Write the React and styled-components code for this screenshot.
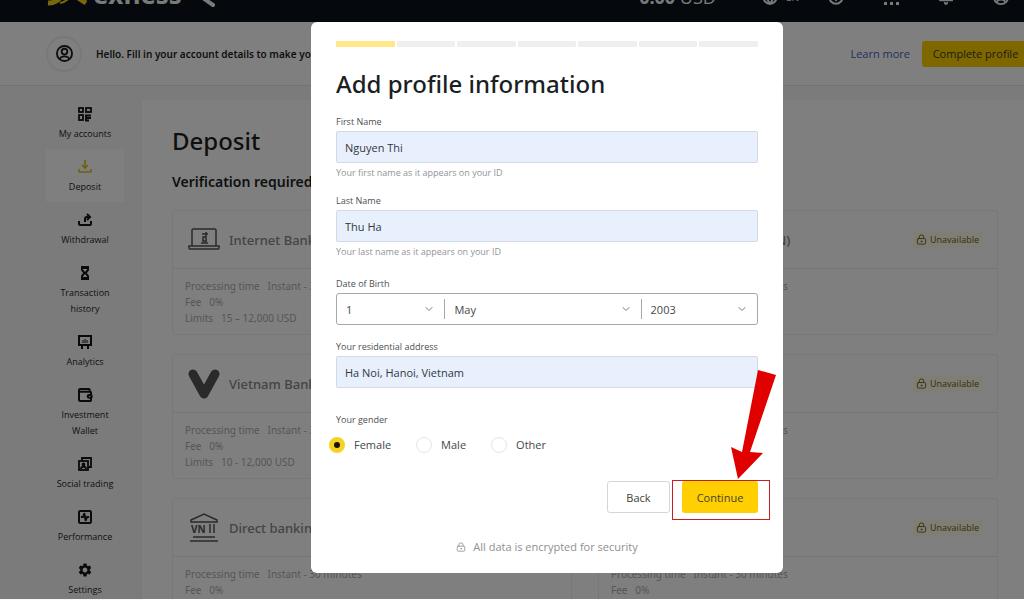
import React, { useState } from "react";
import styled, { createGlobalStyle } from "styled-components";
import {
  LuBell,
  LuChevronDown,
  LuCircleHelp,
  LuGlobe,
  LuLockKeyhole,
  LuSquareActivity,
  LuWallet,
} from "react-icons/lu";
import { MdSettings } from "react-icons/md";

const GlobalStyle = createGlobalStyle`
  * {
    box-sizing: border-box;
  }
  body {
    margin: 0;
    overflow: hidden;
    background-color: #f7f7f7;
    color: #1b1f23;
  }
  body, button, input, select {
    font-family: "Open Sans", "Noto Sans", sans-serif;
  }
`;

/* the page is a little wider than the window and is clipped on the right */
const Page = styled.div`
  width: calc(100% + 70px);
  height: 100vh;
  overflow: hidden;
`;

const TopBar = styled.header`
  display: flex;
  align-items: center;
  gap: 16px;
  height: 50px;
  margin-top: -28px;
  padding: 0 85px 0 47px;
  background-color: #0a121c;
  color: #f4f4f4;
`;

const Brand = styled.a`
  display: flex;
  align-items: center;
  gap: 5px;
  margin-bottom: 6px;
  color: inherit;
  font-size: 26px;
  font-weight: 700;
  line-height: 26px;
  text-decoration: none;
`;

const Balance = styled.div`
  margin-left: auto;
  margin-right: 30px;
  font-size: 18px;
  line-height: 24px;
`;

const TopIcons = styled.nav`
  display: flex;
  align-items: center;
  gap: 39px;
`;

const Language = styled.span`
  display: flex;
  align-items: center;
  gap: 8px;
  margin-right: -10px;
  font-size: 10px;
`;

const Banner = styled.section`
  display: flex;
  align-items: center;
  height: 64px;
  padding: 0 65px 0 46px;
  background-color: #fff;
  border-bottom: 1px solid #e4e4e4;
  font-size: 11px;
`;

const Avatar = styled.span`
  display: flex;
  align-items: center;
  justify-content: center;
  width: 36px;
  height: 36px;
  margin-right: 14px;
  border: 2px solid #f0f0f0;
  border-radius: 50%;
`;

const Hello = styled.p`
  margin: 0;
  font-family: "Noto Sans", sans-serif;
  font-size: 10px;
  font-weight: 600;
`;

const LearnMore = styled.a`
  margin-left: auto;
  margin-right: 12px;
  color: #3f62b5;
  text-decoration: none;
`;

const CompleteButton = styled.button`
  width: 107px;
  height: 26px;
  padding: 0;
  border: 0;
  border-radius: 3px;
  background-color: #ffcf01;
  color: #3d3a2a;
  font-size: 11px;
`;

const Main = styled.div`
  display: flex;
  align-items: flex-start;
`;

const SideBar = styled.nav`
  display: flex;
  flex-direction: column;
  width: 141px;
  padding: 10px 17px 0 46px;
`;

const SideItem = styled.a`
  display: flex;
  flex-direction: column;
  align-items: center;
  gap: 4px;
  padding: 10px 8px 7px;
  background-color: ${(props) => (props.$active ? "#fff" : "transparent")};
  color: #1b1f23;
  font-size: 9px;
  line-height: 16px;
  text-align: center;
  text-decoration: none;

  svg {
    flex-shrink: 0;
    color: ${(props) => (props.$active ? "#e0be20" : "#101418")};
  }
`;

const Panel = styled.main`
  flex: 1;
  margin: 13px 65px 0 0;
  padding: 25px 30px;
  background-color: #fff;
  border: 1px solid #f4f4f4;
`;

const PageTitle = styled.h1`
  margin: 0 0 16px;
  font-family: "Noto Sans", sans-serif;
  font-size: 24px;
  font-weight: 500;
  line-height: 32px;
`;

const SubTitle = styled.h2`
  margin: 0 0 19px;
  font-family: "Noto Sans", sans-serif;
  font-size: 14px;
  font-weight: 600;
  line-height: 18px;
`;

const CardGrid = styled.div`
  display: grid;
  grid-template-columns: 1fr 1fr;
  gap: 19px 26px;
`;

const Card = styled.article`
  height: 125px;
  border: 1px solid #f0f0f0;
  border-radius: 3px;
`;

const CardHead = styled.header`
  display: flex;
  align-items: center;
  gap: 9px;
  height: 58px;
  padding: 0 15px;
  border-bottom: 1px solid #e8e8e8;
  color: #888;
  font-family: "Noto Sans", sans-serif;
  font-size: 13px;
  font-weight: 500;
`;

const CardName = styled.span`
  flex: 1;
  white-space: nowrap;
`;

const Unavailable = styled.span`
  display: flex;
  align-items: center;
  gap: 3px;
  padding: 2px 3px;
  background-color: #fffbe8;
  color: #6b5c12;
  font-family: "Open Sans", sans-serif;
  font-size: 9px;
`;

const CardBody = styled.div`
  padding: 9px 12px;
  color: #acacac;
  font-family: "Noto Sans", sans-serif;
  font-size: 10px;
  line-height: 16px;
`;

const Overlay = styled.div`
  position: absolute;
  inset: 0 -70px 1px 0;
  display: flex;
  align-items: flex-start;
  justify-content: center;
  padding-top: 22px;
  background-color: rgba(0, 0, 0, 0.5);
`;

const Dialog = styled.form`
  width: 472px;
  padding: 19px 25px;
  border-radius: 6px;
  background-color: #fff;
`;

const Steps = styled.div`
  display: grid;
  grid-template-columns: repeat(7, 1fr);
  gap: 2px;
  margin-bottom: 21px;
`;

const Step = styled.span`
  height: 6px;
  border-radius: 1px;
  background-color: ${(props) => (props.$done ? "#ffe78a" : "#efefef")};
`;

const DialogTitle = styled.h2`
  margin: 0 0 15px;
  font-family: "Noto Sans", sans-serif;
  font-size: 24px;
  font-weight: 500;
  line-height: 32px;
`;

const Field = styled.div`
  display: flex;
  flex-direction: column;
  margin-bottom: ${(props) => props.$space}px;
`;

const Label = styled.label`
  margin-bottom: 2px;
  color: #4c4f52;
  font-size: 9px;
  line-height: 14px;
`;

const TextInput = styled.input`
  height: 32px;
  padding: 0 8px;
  border: 1px solid #d3dae6;
  border-radius: 2px;
  background-color: #e8f0fe;
  color: #34383d;
  font-size: 11px;
`;

const Hint = styled.small`
  margin-top: 3px;
  color: #929496;
  font-size: 9px;
  line-height: 14px;
`;

const DateBox = styled.div`
  display: grid;
  grid-template-columns: 109fr 197fr 116fr;
  align-items: center;
  height: 32px;
  border: 1px solid #a5a7a9;
  border-radius: 3px;
`;

const SelectWrap = styled.div`
  display: grid;
  align-items: center;
  height: 20px;
  border-right: 1px solid #a5a7a9;

  &:last-child {
    border-right: 0;
  }
  > * {
    grid-area: 1 / 1;
  }
  svg {
    justify-self: end;
    margin-right: 9px;
    color: #77797c;
    pointer-events: none;
  }
`;

const Select = styled.select`
  height: 20px;
  padding: 0 9px;
  border: 0;
  appearance: none;
  background-color: transparent;
  color: #44474a;
  font-size: 11px;
`;

const GenderRow = styled.div`
  display: flex;
  gap: 25px;
  height: 16px;
  margin: 8px 0 28px -7px;
`;

const RadioLabel = styled.label`
  display: flex;
  align-items: center;
  gap: 9px;
  color: #44474a;
  font-size: 11px;
  line-height: 16px;
`;

const Radio = styled.input`
  width: 16px;
  height: 16px;
  margin: 0;
  border: 1px solid #e4e4e4;
  border-radius: 50%;
  appearance: none;
  background-color: #fff;

  &:checked {
    border: 5px solid #f6d321;
    background-color: #17140a;
  }
`;

const Actions = styled.div`
  display: flex;
  justify-content: flex-end;
  gap: 12px;
`;

const Button = styled.button`
  width: ${(props) => (props.$primary ? 76 : 63)}px;
  height: 32px;
  padding: 0;
  border: ${(props) => (props.$primary ? "0" : "1px solid #d6d6d6")};
  border-radius: 3px;
  background-color: ${(props) => (props.$primary ? "#ffcf01" : "#fff")};
  color: #44412f;
  font-size: 11px;
`;

const Marked = styled.div`
  position: relative;
`;

const MarkFrame = styled.span`
  position: absolute;
  inset: -1px -12px -7px -10px;
  border: 1px solid #c81c28;
  pointer-events: none;
`;

const MarkArrow = styled.svg`
  position: absolute;
  bottom: calc(100% + 2px);
  left: 48px;
`;

const Secure = styled.p`
  display: flex;
  align-items: center;
  justify-content: center;
  gap: 7px;
  margin: 26px 0 0;
  color: #8e9092;
  font-size: 11px;
  line-height: 15px;
`;

const LogoIcon = () => (
  <svg width="41" height="24" viewBox="0 0 41 24" fill="none" stroke="#f2cf1d" strokeWidth="5">
    <path d="M1 21c14 1 16-18 38-18" />
    <path d="M1 3c16 0 22 8 38 18" />
    <path d="M13 21c6-1 9-4 12-8" strokeWidth="2" />
  </svg>
);

const KeyIcon = () => (
  <svg width="20" height="24" viewBox="0 0 20 24" fill="none" stroke="currentColor" strokeWidth="4">
    <circle cx="5" cy="8" r="4" />
    <path d="M5 13l10 7" strokeLinecap="round" />
  </svg>
);

const DotsIcon = () => (
  <svg width="16" height="16" viewBox="0 0 16 16" fill="currentColor">
    {[1, 7, 13].map((y) => [1, 7, 13].map((x) => <rect key={x + "-" + y} x={x} y={y} width="3" height="3" />))}
  </svg>
);

const UserIcon = ({ size = 17 }) => (
  <svg width={size} height={size} viewBox="0 0 18 18" fill="none" stroke="currentColor" strokeWidth="2">
    <circle cx="9" cy="9" r="8" />
    <circle cx="9" cy="7" r="3" />
    <path d="M4 15c1-4 9-4 10 0" />
  </svg>
);

const AccountsIcon = () => (
  <svg width="16" height="16" viewBox="0 0 16 16" fill="none" stroke="currentColor" strokeWidth="1.800">
    <rect x="2" y="2" width="4" height="4" />
    <rect x="9" y="2" width="5" height="4" />
    <rect x="2" y="9" width="4" height="5" />
    <path d="M8 9.500h6M9 12h5M9 9v6M8 14.500h4" />
  </svg>
);

const DepositIcon = () => (
  <svg width="16" height="16" viewBox="0 0 16 16" fill="none" stroke="currentColor" strokeWidth="1.700">
    <path d="M8 1v8M5 6l3 3 3-3M2 10v2q0 1 1 1h10q1 0 1-1v-2" />
  </svg>
);

const WithdrawalIcon = () => (
  <svg width="16" height="16" viewBox="0 0 16 16" fill="none" stroke="currentColor" strokeWidth="2">
    <path d="M2 9v3q0 1 1 1h10q1 0 1-1V9M8 10V7q0-2 2-2h3M10 2l3 3-3 3" />
  </svg>
);

const HourglassIcon = () => (
  <svg width="16" height="16" viewBox="0 0 16 16" fill="none" stroke="currentColor" strokeWidth="2">
    <path d="M5 3h6v2L8.500 8 11 11v2H5v-2l2.500-3L5 5z" />
    <path d="M4 2h8M4 14h8" />
  </svg>
);

const AnalyticsIcon = () => (
  <svg width="16" height="16" viewBox="0 0 16 16" fill="none" stroke="currentColor" strokeWidth="2">
    <rect x="2" y="2" width="12" height="9" />
    <path d="M5 12v3M11 12v3" />
    <path d="M6 6v3M8 5v4M10 6v3" strokeWidth="1" />
  </svg>
);

const SocialIcon = () => (
  <svg width="16" height="16" viewBox="0 0 16 16" fill="none" stroke="currentColor" strokeWidth="1.800">
    <path d="M5 5V2h9v9h-3" />
    <rect x="2" y="5" width="9" height="9" />
    <circle cx="6.500" cy="8.500" r="1" />
    <path d="M4 13c0-3 5-3 5 0" />
  </svg>
);

const LaptopIcon = () => (
  <svg width="32" height="32" viewBox="0 0 32 32" fill="none" stroke="#555" strokeWidth="1.500">
    <path d="M4 22V6q0-1 1-1h22q1 0 1 1v16M1 22h30v2q0 1-1 1H2q-1 0-1-1z" />
    <path d="M18 8v10M14 10h6M18 13h-3v4h3M13 19h7" />
  </svg>
);

const VIcon = () => (
  <svg width="32" height="32" viewBox="0 0 32 32" fill="none" stroke="#555" strokeWidth="9">
    <path d="M5 6l11 20L27 6" strokeLinecap="round" strokeLinejoin="round" />
  </svg>
);

const BankIcon = () => (
  <svg width="32" height="32" viewBox="0 0 32 32" fill="none" stroke="#555" strokeWidth="1.500">
    <path d="M3 8l13-6 13 6v2H3zM5 25h22M2 29h28M22 12v9M26 12v9" />
    <text x="3" y="21" fill="#555" stroke="none" fontSize="10" fontWeight="700">
      VN
    </text>
  </svg>
);

const menu = [
  { name: "My accounts", icon: <AccountsIcon /> },
  { name: "Deposit", icon: <DepositIcon />, active: true },
  { name: "Withdrawal", icon: <WithdrawalIcon /> },
  { name: "Transaction history", icon: <HourglassIcon /> },
  { name: "Analytics", icon: <AnalyticsIcon /> },
  { name: "Investment Wallet", icon: <LuWallet size={16} strokeWidth={3} /> },
  { name: "Social trading", icon: <SocialIcon /> },
  { name: "Performance", icon: <LuSquareActivity size={16} strokeWidth={3} /> },
  { name: "Settings", icon: <MdSettings size={16} /> },
];

const methods = [
  { name: "Internet Banking", icon: <LaptopIcon />, limits: "15 – 12,000 USD" },
  { name: "Internet Banking (VN)", icon: <LaptopIcon />, limits: "15 – 12,000 USD", locked: true },
  { name: "Vietnam Bank Transfer", icon: <VIcon />, limits: "10 - 12,000 USD" },
  { name: "Bank Transfer", icon: <BankIcon />, limits: "10 - 12,000 USD", locked: true },
  { name: "Direct banking", icon: <BankIcon />, limits: "15 - 12,000 USD" },
  { name: "Bank Card", icon: <BankIcon />, limits: "15 - 12,000 USD", locked: true },
];

const genders = ["Female", "Male", "Other"];

function DateSelect({ label, value }) {
  return (
    <SelectWrap>
      <Select aria-label={label} defaultValue={value}>
        <option>{value}</option>
      </Select>
      <LuChevronDown size={12} />
    </SelectWrap>
  );
}

function ProfileDialog() {
  const [gender, setGender] = useState("Female");

  return (
    <Dialog onSubmit={(e) => e.preventDefault()}>
      <Steps>
        {[1, 2, 3, 4, 5, 6, 7].map((step) => (
          <Step key={step} $done={step === 1} />
        ))}
      </Steps>
      <DialogTitle>Add profile information</DialogTitle>
      <Field $space={14}>
        <Label htmlFor="first">First Name</Label>
        <TextInput id="first" defaultValue="Nguyen Thi" />
        <Hint>Your first name as it appears on your ID</Hint>
      </Field>
      <Field $space={18}>
        <Label htmlFor="last">Last Name</Label>
        <TextInput id="last" defaultValue="Thu Ha" />
        <Hint>Your last name as it appears on your ID</Hint>
      </Field>
      <Field $space={15}>
        <Label as="span">Date of Birth</Label>
        <DateBox>
          <DateSelect label="Day" value="1" />
          <DateSelect label="Month" value="May" />
          <DateSelect label="Year" value="2003" />
        </DateBox>
      </Field>
      <Field $space={25}>
        <Label htmlFor="address">Your residential address</Label>
        <TextInput id="address" defaultValue="Ha Noi, Hanoi, Vietnam" />
      </Field>
      <Field $space={0} role="radiogroup" aria-label="Your gender">
        <Label as="span">Your gender</Label>
        <GenderRow>
          {genders.map((item) => (
            <RadioLabel key={item}>
              <Radio type="radio" name="gender" checked={gender === item} onChange={() => setGender(item)} />
              {item}
            </RadioLabel>
          ))}
        </GenderRow>
      </Field>
      <Actions>
        <Button type="button">Back</Button>
        <Marked>
          <Button type="submit" $primary>
            Continue
          </Button>
          <MarkFrame />
          <MarkArrow width="46" height="109" viewBox="0 0 46 109">
            <path fill="#e00000" d="M28 0l18 5-26 77 13 1L8 109 1 77l11 5z" />
          </MarkArrow>
        </Marked>
      </Actions>
      <Secure>
        <LuLockKeyhole size={10} />
        All data is encrypted for security
      </Secure>
    </Dialog>
  );
}

function App() {
  return (
    <>
      <GlobalStyle />
      <Page>
        <TopBar>
          <Brand href="#">
            <LogoIcon />
            exness
          </Brand>
          <KeyIcon />
          <Balance>
            <b>0.00</b> USD
          </Balance>
          <TopIcons>
            <Language>
              <LuGlobe size={16} strokeWidth={3} /> EN
            </Language>
            <LuCircleHelp size={16} strokeWidth={3} />
            <DotsIcon />
            <LuBell size={16} strokeWidth={3} />
            <UserIcon size={16} />
          </TopIcons>
        </TopBar>
        <Banner>
          <Avatar>
            <UserIcon />
          </Avatar>
          <Hello>Hello. Fill in your account details to make your first deposit</Hello>
          <LearnMore href="#">Learn more</LearnMore>
          <CompleteButton>Complete profile</CompleteButton>
        </Banner>
        <Main>
          <SideBar>
            {menu.map((item) => (
              <SideItem key={item.name} href="#" $active={item.active}>
                {item.icon}
                {item.name}
              </SideItem>
            ))}
          </SideBar>
          <Panel>
            <PageTitle>Deposit</PageTitle>
            <SubTitle>Verification required</SubTitle>
            <CardGrid>
              {methods.map((item) => (
                <Card key={item.name}>
                  <CardHead>
                    {item.icon}
                    <CardName>{item.name}</CardName>
                    {item.locked && (
                      <Unavailable>
                        <LuLockKeyhole size={11} />
                        Unavailable
                      </Unavailable>
                    )}
                  </CardHead>
                  <CardBody>
                    Processing time&nbsp;&nbsp; Instant - 30 minutes
                    <br />
                    Fee&nbsp;&nbsp; 0%
                    <br />
                    Limits&nbsp;&nbsp; {item.limits}
                  </CardBody>
                </Card>
              ))}
            </CardGrid>
          </Panel>
        </Main>
      </Page>
      <Overlay>
        <ProfileDialog />
      </Overlay>
    </>
  );
}

export default App;
